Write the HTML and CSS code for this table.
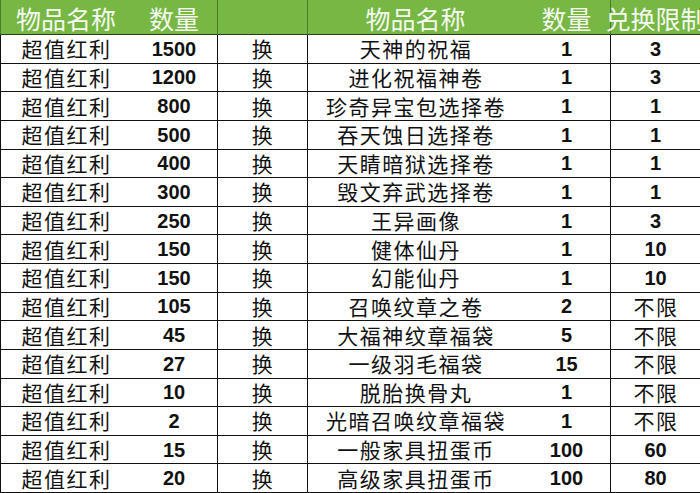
FILE: index.html
```html
<!DOCTYPE html>
<html lang="zh-CN">
<head>
<meta charset="utf-8">
<title>兑换表</title>
<link rel="stylesheet" href="styles.css">
</head>
<body>
<div class="sheet">
  <div class="h bl-h">物品名称</div>
  <div class="h">数量</div>
  <div class="h bl-h"></div>
  <div class="h bl-h">物品名称</div>
  <div class="h">数量</div>
  <div class="h bl-h">兑换限制</div>

  <div class="c bl cn">超值红利</div><div class="c num">1500</div><div class="c bl cn">换</div><div class="c bl cn">天神的祝福</div><div class="c num">1</div><div class="c bl num">3</div>
  <div class="c bl cn">超值红利</div><div class="c num">1200</div><div class="c bl cn">换</div><div class="c bl cn">进化祝福神卷</div><div class="c num">1</div><div class="c bl num">3</div>
  <div class="c bl cn">超值红利</div><div class="c num">800</div><div class="c bl cn">换</div><div class="c bl cn">珍奇异宝包选择卷</div><div class="c num">1</div><div class="c bl num">1</div>
  <div class="c bl cn">超值红利</div><div class="c num">500</div><div class="c bl cn">换</div><div class="c bl cn">吞天蚀日选择卷</div><div class="c num">1</div><div class="c bl num">1</div>
  <div class="c bl cn">超值红利</div><div class="c num">400</div><div class="c bl cn">换</div><div class="c bl cn">天睛暗狱选择卷</div><div class="c num">1</div><div class="c bl num">1</div>
  <div class="c bl cn">超值红利</div><div class="c num">300</div><div class="c bl cn">换</div><div class="c bl cn">毁文弃武选择卷</div><div class="c num">1</div><div class="c bl num">1</div>
  <div class="c bl cn">超值红利</div><div class="c num">250</div><div class="c bl cn">换</div><div class="c bl cn">王异画像</div><div class="c num">1</div><div class="c bl num">3</div>
  <div class="c bl cn">超值红利</div><div class="c num">150</div><div class="c bl cn">换</div><div class="c bl cn">健体仙丹</div><div class="c num">1</div><div class="c bl num">10</div>
  <div class="c bl cn">超值红利</div><div class="c num">150</div><div class="c bl cn">换</div><div class="c bl cn">幻能仙丹</div><div class="c num">1</div><div class="c bl num">10</div>
  <div class="c bl cn">超值红利</div><div class="c num">105</div><div class="c bl cn">换</div><div class="c bl cn">召唤纹章之卷</div><div class="c num">2</div><div class="c bl cn">不限</div>
  <div class="c bl cn">超值红利</div><div class="c num">45</div><div class="c bl cn">换</div><div class="c bl cn">大福神纹章福袋</div><div class="c num">5</div><div class="c bl cn">不限</div>
  <div class="c bl cn">超值红利</div><div class="c num">27</div><div class="c bl cn">换</div><div class="c bl cn">一级羽毛福袋</div><div class="c num">15</div><div class="c bl cn">不限</div>
  <div class="c bl cn">超值红利</div><div class="c num">10</div><div class="c bl cn">换</div><div class="c bl cn">脱胎换骨丸</div><div class="c num">1</div><div class="c bl cn">不限</div>
  <div class="c bl cn">超值红利</div><div class="c num">2</div><div class="c bl cn">换</div><div class="c bl cn">光暗召唤纹章福袋</div><div class="c num">1</div><div class="c bl cn">不限</div>
  <div class="c bl cn">超值红利</div><div class="c num">15</div><div class="c bl cn">换</div><div class="c bl cn">一般家具扭蛋币</div><div class="c num">100</div><div class="c bl num">60</div>
  <div class="c bl cn">超值红利</div><div class="c num">20</div><div class="c bl cn">换</div><div class="c bl cn">高级家具扭蛋币</div><div class="c num">100</div><div class="c bl num">80</div>
</div>
</body>
</html>
```

FILE: styles.css
```css
html, body {
  margin: 0;
  padding: 0;
  overflow: hidden;
  background: #ffffff;
}

.sheet {
  display: grid;
  grid-template-columns: 131px 86px 90px 216px 87px 90px;
  grid-template-rows: 35px repeat(16, minmax(0, 1fr));
  width: 700px;
  height: 493px;
}

.h, .c {
  box-sizing: border-box;
  display: flex;
  align-items: center;
  justify-content: center;
  white-space: nowrap;
  line-height: 1;
  min-height: 0;
  border-bottom: 1px solid #111;
}

.h {
  background: #77b844;
  color: #f6f8f2;
  font-family: "Noto Sans CJK SC", sans-serif;
  font-size: 25px;
  padding-top: 3px;
  border-bottom-color: #2c3a20;
}

.bl-h {
  border-left: 1px solid #4c7a2c;
}

.bl {
  border-left: 1px solid #111;
}

.cn {
  font-family: "Noto Sans CJK SC", sans-serif;
  font-size: 21px;
  letter-spacing: 1.5px;
  color: #111;
  padding-left: 1px;
}

.num {
  font-family: "Liberation Sans", Arial, sans-serif;
  font-weight: bold;
  font-size: 20px;
  color: #111;
}
```
